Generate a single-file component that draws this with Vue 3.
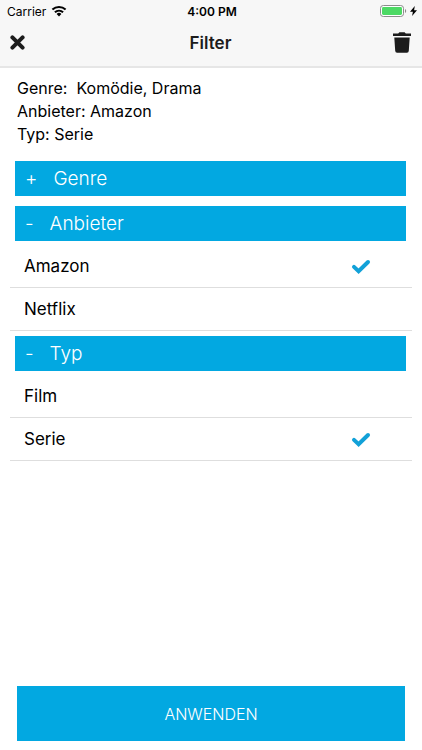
<script setup>
import { computed, reactive } from 'vue'

const sections = reactive([
  {
    name: 'Genre',
    open: false,
    options: [
      { label: 'Komödie', checked: true },
      { label: 'Drama', checked: true },
    ],
  },
  {
    name: 'Anbieter',
    open: true,
    options: [
      { label: 'Amazon', checked: true },
      { label: 'Netflix', checked: false },
    ],
  },
  {
    name: 'Typ',
    open: true,
    options: [
      { label: 'Film', checked: false },
      { label: 'Serie', checked: true },
    ],
  },
])

const summary = computed(() =>
  sections.map((section) => {
    const picked = section.options.filter((o) => o.checked).map((o) => o.label)
    const gap = section.name === 'Genre' ? '  ' : ' '
    return section.name + ':' + gap + picked.join(', ')
  })
)

function clearAll() {
  sections.forEach((s) => s.options.forEach((o) => (o.checked = false)))
}
</script>

<template>
  <div class="screen">
    <header class="top">
      <div class="status">
        <div class="carrier">
          <span>Carrier</span>
          <svg width="16" height="12" viewBox="0 0 16 12" fill="none" stroke="#000" stroke-width="2">
            <path d="M1.4 4.6a9.6 9.6 0 0 1 13.2 0" />
            <path d="M3.9 7.3a6 6 0 0 1 8.2 0" />
            <path d="M8 11.4 5.6 9a3.5 3.5 0 0 1 4.8 0z" fill="#000" stroke="none" />
          </svg>
        </div>
        <span class="time">4:00 PM</span>
        <div class="power">
          <svg width="27" height="12" viewBox="0 0 27 12">
            <rect x="0.5" y="0.5" width="23" height="11" rx="2.8" fill="#fff" stroke="#8c8c8c" />
            <rect x="2" y="2" width="20" height="8" rx="1.4" fill="#4cd964" />
            <path d="M25 4v4c1.6-.6 1.6-3.4 0-4z" fill="#8c8c8c" />
          </svg>
          <svg width="7" height="10" viewBox="0 0 7 10">
            <path d="M4.8 0 0 5.7h2.9L2.1 10 7 4.2H4.1z" fill="#000" />
          </svg>
        </div>
      </div>
      <div class="nav">
        <button class="icon" type="button" aria-label="Schließen">
          <svg width="15" height="15" viewBox="0 0 15 15" fill="none" stroke="#1c1c1c" stroke-width="4" stroke-linecap="round">
            <path d="M2.4 2.4l10.2 10.2M12.6 2.4L2.4 12.6" />
          </svg>
        </button>
        <h1>Filter</h1>
        <button class="icon" type="button" aria-label="Zurücksetzen" @click="clearAll">
          <svg width="18" height="21" viewBox="0 0 18 21" fill="#1c1c1c">
            <path d="M0 1.6h5.2L6.4.2h5.2l1.2 1.4H18v2.5H0z" />
            <path d="M1.3 5.4h15.4l-.9 13.4q-.1 1.9-1.9 1.9H4.1q-1.8 0-1.9-1.9z" />
          </svg>
        </button>
      </div>
    </header>

    <main>
      <div class="summary">
        <p v-for="line in summary" :key="line">{{ line }}</p>
      </div>
      <section v-for="section in sections" :key="section.name">
        <button class="bar" type="button" :aria-expanded="section.open" @click="section.open = !section.open">
          <span>{{ section.open ? '-' : '+' }}</span>
          <span>{{ section.name }}</span>
        </button>
        <div v-if="section.open" class="options">
          <label v-for="option in section.options" :key="option.label" class="option">
            <span>{{ option.label }}</span>
            <input v-model="option.checked" type="checkbox" />
            <svg v-if="option.checked" width="20" height="15" viewBox="0 0 20 15" fill="none" stroke="#12a1d8" stroke-width="4" stroke-linecap="round">
              <path d="M3 7.9l4.6 4.3L17 3" />
            </svg>
          </label>
        </div>
      </section>
    </main>

    <footer>
      <button class="apply" type="button">ANWENDEN</button>
    </footer>
  </div>
</template>

<style>
body {
  margin: 0;
  background: #fff;
}
</style>

<style scoped>
.screen {
  min-height: 100vh;
  display: flex;
  flex-direction: column;
  font-family: Inter, "Liberation Sans", sans-serif;
  color: #000;
}
button {
  border: 0;
  padding: 0;
  background: none;
  font-family: inherit;
  cursor: pointer;
}
svg {
  display: block;
}
.top {
  background: #f7f7f7;
  border-bottom: 2px solid #e6e6e6;
}
.status,
.nav {
  display: grid;
  grid-template-columns: 1fr auto 1fr;
  align-items: center;
}
.status {
  height: 22px;
  padding: 0 5px 0 7px;
  font-size: 12px;
}
.carrier,
.power {
  display: flex;
  align-items: center;
  gap: 5px;
}
.power {
  justify-content: flex-end;
  gap: 3px;
}
.time {
  font-weight: 600;
}
.nav {
  height: 44px;
  padding: 0 11px 2px 10px;
  box-sizing: border-box;
}
.icon {
  justify-self: start;
  padding-bottom: 2px;
}
.icon:last-child {
  justify-self: end;
}
h1 {
  margin: 0;
  font-size: 17px;
  font-weight: 600;
  color: #1c1c1c;
}
.summary {
  padding: 9px 17px 15px;
  font-size: 16px;
  line-height: 23px;
}
.summary p {
  margin: 0;
  white-space: pre-wrap;
}
.bar {
  display: flex;
  align-items: center;
  gap: 16px;
  width: calc(100% - 31px);
  height: 35px;
  margin: 0 16px 10px 15px;
  padding: 0 10px;
  background: #02a8e1;
  color: #fff;
  font-size: 19px;
  font-weight: 300;
}
.options {
  margin: -6px 10px 5px;
}
.option {
  display: flex;
  align-items: center;
  justify-content: space-between;
  height: 42px;
  padding: 0 41px 0 14px;
  border-bottom: 1px solid #dedede;
  font-size: 17px;
  line-height: 24px;
  cursor: pointer;
}
.option input {
  appearance: none;
  width: 0;
  height: 0;
  margin: 0;
}
footer {
  margin-top: auto;
  padding: 16px 17px 9px;
}
.apply {
  display: block;
  width: 100%;
  height: 55px;
  background: #02a8e1;
  color: #fff;
  font-size: 16px;
  font-weight: 300;
}
</style>
